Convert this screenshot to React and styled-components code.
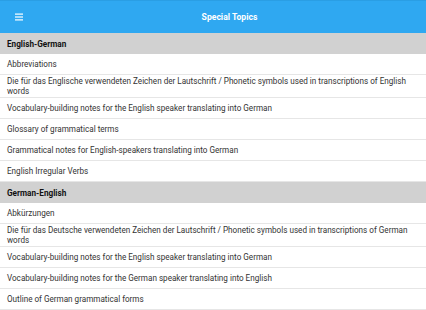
import React from "react";
import styled, { createGlobalStyle } from "styled-components";

const Global = createGlobalStyle`
  html, body { margin: 0; padding: 0; background: #fff; }
  body { font-family: Roboto, "Liberation Sans", Arial, sans-serif; }
  * { box-sizing: border-box; }
`;

const Page = styled.div`
  width: 426px;
  height: 310px;
  overflow: hidden;
  display: flex;
  flex-direction: column;
  background: #fff;
`;

const Toolbar = styled.div`
  height: 33px;
  flex: none;
  display: flex;
  align-items: center;
  background: #2fa8f1;
  border-top: 1px solid #2a9ee4;
`;

const MenuButton = styled.button`
  width: 33px;
  height: 32px;
  border: 0;
  padding: 0 0 0 5px;
  background: transparent;
  display: flex;
  align-items: center;
  justify-content: center;
`;

const Title = styled.div`
  flex: 1;
  text-align: center;
  color: #fff;
  font-weight: 700;
  font-size: 8.6px;
  line-height: 10px;
`;

const List = styled.div`
  display: flex;
  flex-direction: column;
`;

const SectionHeader = styled.div`
  height: 21px;
  display: flex;
  align-items: center;
  padding: 0 7px;
  background: #d1d1d1;
  color: #111;
  font-weight: 700;
  font-size: 8.2px;
`;

const Row = styled.div`
  min-height: 21px;
  display: flex;
  align-items: center;
  padding: 1px 7px;
  border-bottom: 1px solid #e6e6e6;
  color: #333;
  font-size: 8.15px;
  line-height: 10px;
`;

const sections = [
  {
    title: "English-German",
    items: [
      "Abbreviations",
      "Die für das Englische verwendeten Zeichen der Lautschrift / Phonetic symbols used in transcriptions of English words",
      "Vocabulary-building notes for the English speaker translating into German",
      "Glossary of grammatical terms",
      "Grammatical notes for English-speakers translating into German",
      "English Irregular Verbs",
    ],
  },
  {
    title: "German-English",
    items: [
      "Abkürzungen",
      "Die für das Deutsche verwendeten Zeichen der Lautschrift / Phonetic symbols used in transcriptions of German words",
      "Vocabulary-building notes for the English speaker translating into German",
      "Vocabulary-building notes for the German speaker translating into English",
      "Outline of German grammatical forms",
    ],
  },
];

const MenuIcon = () => (
  <svg width="9" height="8" viewBox="0 0 9 8">
    <rect x="0" y="0.5" width="8" height="1.2" fill="#fff" />
    <rect x="0" y="3.4" width="8" height="1.2" fill="#fff" />
    <rect x="0" y="6.3" width="8" height="1.2" fill="#fff" />
  </svg>
);

export default function App() {
  return (
    <>
      <Global />
      <Page>
        <Toolbar>
          <MenuButton aria-label="menu">
            <MenuIcon />
          </MenuButton>
          <Title>Special Topics</Title>
        </Toolbar>
        <List>
          {sections.map((s) => (
            <React.Fragment key={s.title}>
              <SectionHeader>{s.title}</SectionHeader>
              {s.items.map((it, i) => (
                <Row key={i}>{it}</Row>
              ))}
            </React.Fragment>
          ))}
        </List>
      </Page>
    </>
  );
}
